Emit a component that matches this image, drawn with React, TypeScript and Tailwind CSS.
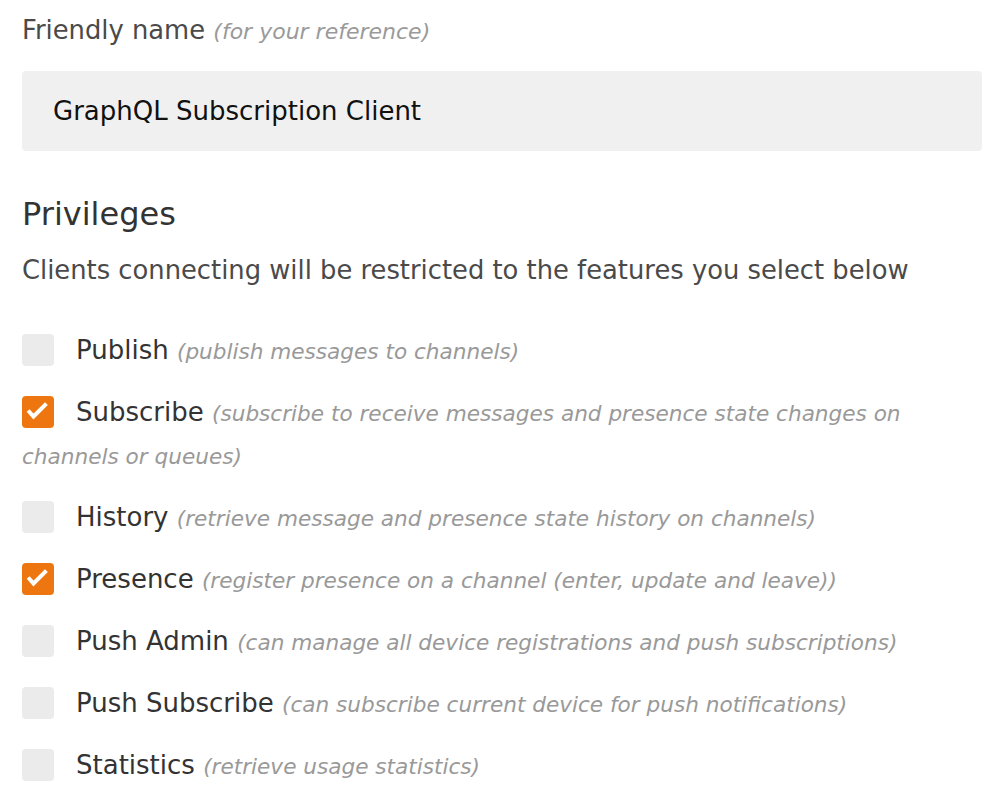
const privileges = [
  { name: 'Publish', hint: 'publish messages to channels', checked: false },
  { name: 'Subscribe', hint: 'subscribe to receive messages and presence state changes on channels or queues', checked: true },
  { name: 'History', hint: 'retrieve message and presence state history on channels', checked: false },
  { name: 'Presence', hint: 'register presence on a channel (enter, update and leave)', checked: true },
  { name: 'Push Admin', hint: 'can manage all device registrations and push subscriptions', checked: false },
  { name: 'Push Subscribe', hint: 'can subscribe current device for push notifications', checked: false },
  { name: 'Statistics', hint: 'retrieve usage statistics', checked: false },
];

function Checkbox({ checked }: { checked: boolean }) {
  return (
    <span
      className={`inline-block w-8 h-8 rounded-[4px] align-top mt-[5px] mr-[22px] ${
        checked ? 'bg-[#ee7610]' : 'bg-[#ebebeb]'
      }`}
    >
      {checked && (
        <svg width="32" height="32" viewBox="0 0 32 32" className="block">
          <path d="M7.5 16 L11.5 20.5 L23 9" fill="none" stroke="#fff" strokeWidth="4" strokeLinecap="square" />
        </svg>
      )}
    </span>
  );
}

export default function App() {
  return (
    <div className="bg-white min-h-screen pl-[22px] pr-[26px] pt-[14px] font-['DejaVu_Sans',sans-serif] text-[#4a4a4a]">
      <label className="block text-[25.8px] leading-[32px]">
        Friendly name <em className="text-[22px] text-[#9a9a9a]">(for your reference)</em>
      </label>
      <div className="mt-[23px] h-[80px] rounded-[4px] bg-[#f0f0f0] flex items-center px-[31px] text-[26px] text-[#111]">
        GraphQL Subscription Client
      </div>

      <h2 className="mt-[43px] text-[32px] leading-[40px] text-[#333]">Privileges</h2>
      <p className="mt-[20px] text-[25.8px] leading-[32px]">
        Clients connecting will be restricted to the features you select below
      </p>

      <ul className="mt-[43px]">
        {privileges.map((p) => (
          <li key={p.name} className="mb-[19px] leading-[43px] text-[26px] text-[#333]">
            <Checkbox checked={p.checked} />
            {p.name} <em className="text-[21.6px] leading-none text-[#999]">({p.hint})</em>
          </li>
        ))}
      </ul>
    </div>
  );
}
